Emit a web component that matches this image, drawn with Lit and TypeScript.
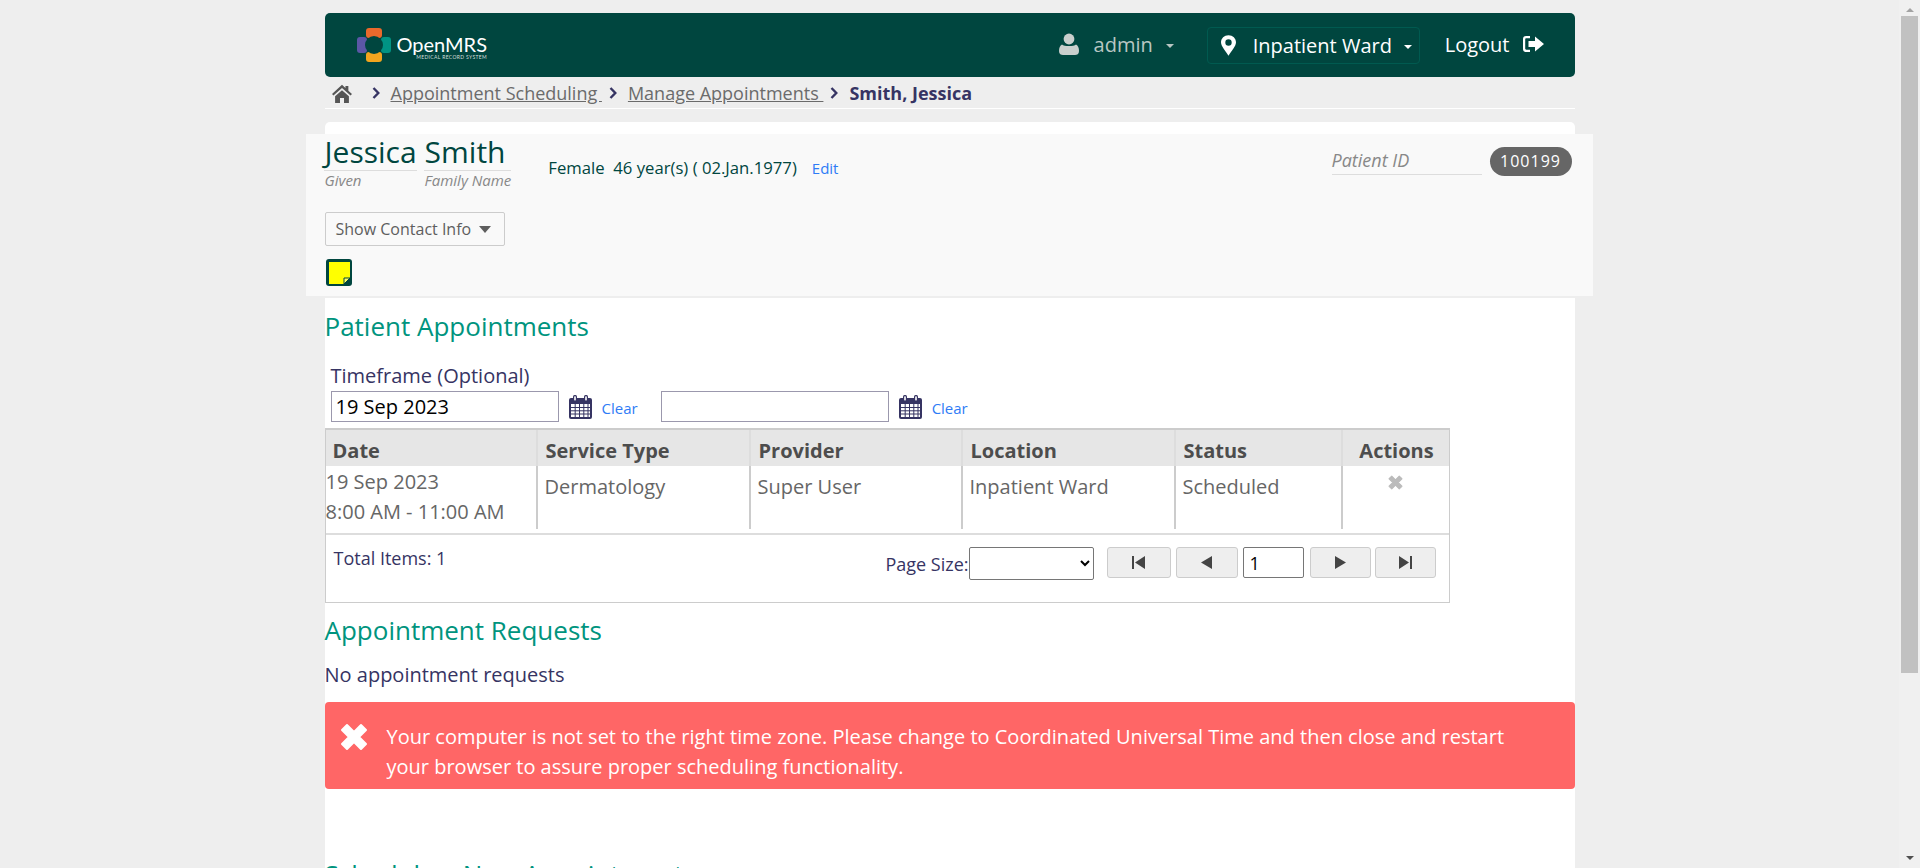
import { LitElement, css, html, svg } from 'lit'
import { customElement } from 'lit/decorators.js'

const homeIcon = svg`<path d="M12 2 L1 12 l1.6 1.8 L12 5.6 l9.4 8.2 L23 12 l-4-3.6 V3.2 h-3.2 v2.4z M4.4 14.6 L12 8 l7.6 6.6 V22 h-5.4 v-5.4 h-4.4 V22 H4.4z"/>`
const userIcon = svg`<circle cx="10" cy="6" r="5.4"/><path d="M3 11.5 C5 13.5 15 13.5 17 11.5 C19 12.5 20 15 20 18 C20 21 18 22 16 22 H4 C2 22 0 21 0 18 C0 15 1 12.5 3 11.5z"/>`
const pinIcon = svg`<path fill-rule="evenodd" d="M8 0 C3.4 0 0 3.4 0 7.6 C0 12 5 17 8 22 C11 17 16 12 16 7.6 C16 3.4 12.6 0 8 0z M8 4.4 A3.4 3.4 0 1 1 8 11.2 A3.4 3.4 0 1 1 8 4.4z"/>`
const logoutIcon = svg`<path d="M8 1 H4 C2 1 1 2.2 1 4 V14 C1 15.8 2 17 4 17 H8 V14.8 H4.4 C3.6 14.8 3.2 14.3 3.2 13.6 V4.4 C3.2 3.7 3.6 3.2 4.4 3.2 H8z"/><path d="M6.5 6 H13 V1.6 L22 9 L13 16.4 V12 H6.5z"/>`
const closeIcon = svg`<polygon points="7,2 14,9 21,2 26,7 19,14 26,21 21,26 14,19 7,26 2,21 9,14 2,7" stroke-width="2" stroke-linejoin="round"/>`

@customElement('app-root')
export class AppRoot extends LitElement {
  static styles = css`
    :host {
      display: flex;
      height: 100vh;
      overflow: hidden;
      background: #eeeeee;
      font-family: 'Open Sans', sans-serif;
      font-size: 20px;
      color: #363463;
    }

    .page {
      flex: 1;
      min-width: 0;
      overflow: hidden;
    }

    .container {
      width: 1250px;
      margin: 0 auto;
      padding-top: 13px;
    }

    /* top bar */
    .topbar {
      display: flex;
      align-items: center;
      height: 64px;
      border-radius: 5px;
      background: #00463f;
      color: #ffffff;
      padding: 0 30px 0 32px;
    }

    .logo {
      display: flex;
      align-items: center;
      gap: 6px;
    }

    .logo-text {
      display: flex;
      flex-direction: column;
      align-items: flex-end;
      padding-top: 3px;
      font-family: Lato, sans-serif;
      font-size: 20px;
      line-height: 20px;
    }

    .logo-text small {
      font-size: 5px;
      line-height: 6px;
      letter-spacing: 0.35px;
      color: #d5dedc;
    }

    .spacer {
      flex: 1;
    }

    .user {
      display: flex;
      align-items: center;
      padding-bottom: 2px;
      color: #b8c6c3;
    }

    .user svg {
      fill: #c9cfcd;
      margin-right: 15px;
    }

    .caret {
      width: 0;
      height: 0;
      border: 4.5px solid transparent;
      border-top-color: currentColor;
      border-bottom: 0;
      margin-left: 13px;
      margin-top: 3px;
    }

    .ward {
      display: flex;
      align-items: center;
      width: 213px;
      height: 37px;
      box-sizing: border-box;
      margin-left: 33px;
      padding: 0 7px 0 13px;
      border: 1px solid #005a50;
      border-radius: 4px;
      white-space: nowrap;
    }

    .ward svg {
      fill: #ffffff;
      margin-right: 17px;
    }

    .ward .caret {
      margin-left: auto;
    }

    .logout {
      display: flex;
      align-items: center;
      gap: 12px;
      margin-left: 25px;
      padding-bottom: 2px;
    }

    .logout svg {
      fill: #ffffff;
    }

    /* breadcrumb */
    .crumbs {
      display: flex;
      align-items: center;
      height: 32px;
      box-sizing: border-box;
      padding: 0 0 0 6px;
      border-bottom: 1px solid #ffffff;
      font-size: 18px;
      color: #5b57a6;
    }

    .crumbs .home {
      fill: #555555;
      margin-right: 19px;
    }

    .crumbs a {
      color: #6b6b6b;
      text-decoration: underline;
      white-space: pre;
    }

    .crumbs .sep {
      fill: none;
      stroke: #363463;
      stroke-width: 2.4;
      margin: 0 11px 0 7px;
    }

    .crumbs .sep.first {
      margin-left: 0;
    }

    .crumbs b {
      color: #363463;
      font-weight: 700;
    }

    /* white sheet */
    .sheet {
      margin-top: 13px;
      background: #ffffff;
      border-radius: 5px 5px 0 0;
      padding-top: 12px;
    }

    .patient {
      display: flex;
      justify-content: space-between;
      height: 162px;
      box-sizing: content-box;
      margin: 0 -18px 0 -19px;
      padding: 0 21px 0 19px;
      background: #f9f9f9;
      border-bottom: 2px solid #eeeeee;
    }

    .names {
      display: flex;
      align-items: flex-start;
      height: 71px;
    }

    .name {
      display: flex;
      flex-direction: column;
      margin-right: 8px;
      color: #00463f;
      font-size: 30px;
      line-height: 36px;
    }

    .name span {
      border-bottom: 1px solid #dddddd;
      margin-left: -1px;
      padding-left: 1px;
    }

    .name small {
      font-size: 15px;
      line-height: 18px;
      font-style: italic;
      color: #888888;
    }

    .demographics {
      display: flex;
      align-items: baseline;
      margin: 22px 0 0 29px;
      font-size: 16.7px;
      color: #00463f;
      white-space: pre;
    }

    .demographics a,
    .clear {
      font-size: 15px;
      color: #2f7cf6;
    }

    .demographics a {
      margin-left: 15px;
    }

    .contact {
      display: flex;
      align-items: center;
      justify-content: space-between;
      width: 180px;
      height: 34px;
      box-sizing: border-box;
      margin-top: 7px;
      padding: 0 13px 0 10px;
      border: 1px solid #cccccc;
      border-radius: 2px;
      font-size: 16px;
      color: #5e5e5e;
    }

    .contact i {
      width: 0;
      height: 0;
      border: 6px solid transparent;
      border-top: 7px solid #5e5e5e;
      border-bottom: 0;
    }

    .note {
      display: block;
      margin: 13px 0 0 1px;
    }

    .identifier {
      display: flex;
      align-items: flex-start;
      gap: 8px;
      margin-top: 13px;
    }

    .identifier em {
      display: block;
      width: 150px;
      height: 27px;
      border-bottom: 1px solid #dddddd;
      font-size: 18px;
      line-height: 26px;
      color: #888888;
    }

    .identifier b {
      width: 82px;
      height: 29px;
      border-radius: 15px;
      background: #666666;
      color: #ffffff;
      font-size: 16px;
      font-weight: 400;
      line-height: 29px;
      letter-spacing: 1px;
      text-align: center;
    }

    /* sections */
    h2 {
      margin: 0;
      font-size: 26px;
      font-weight: 400;
      line-height: 33px;
      color: #00947e;
    }

    .appointments {
      padding-top: 12px;
    }

    .timeframe {
      margin: 20px 0 0 6px;
      line-height: 25px;
    }

    .dates {
      display: flex;
      align-items: center;
      height: 31px;
      margin: 3px 0 6px 6px;
    }

    .dates input {
      width: 228px;
      height: 31px;
      box-sizing: border-box;
      padding: 0 4px;
      border: 1px solid #9b98ad;
      font: inherit;
      color: #000000;
      outline: none;
    }

    .dates svg {
      margin-left: 10px;
    }

    .clear {
      margin: 3px 23px 0 10px;
    }

    table {
      width: 1123px;
      border-collapse: collapse;
      table-layout: fixed;
      color: #666666;
    }

    .grid {
      width: 1125px;
      box-sizing: border-box;
      border: 1px solid #cccccc;
      border-top-width: 2px;
    }

    th {
      height: 36px;
      padding: 5px 0 0 8px;
      box-sizing: border-box;
      background: #e6e6e6;
      border-left: 2px solid #dddddd;
      color: #4d4d4d;
      font-size: 20px;
      font-weight: 700;
      text-align: left;
    }

    td {
      height: 63px;
      padding: 6px 0 0 7px;
      box-sizing: border-box;
      border-left: 2px solid #cccccc;
      line-height: 30px;
      vertical-align: top;
    }

    th:first-child,
    td:first-child {
      border-left: 0;
    }

    th:first-child {
      padding-left: 7px;
    }

    td.when {
      padding: 1px 0 0;
      white-space: nowrap;
    }

    th.center {
      padding-left: 2px;
      text-align: center;
    }

    td.center {
      padding: 2px 0 0 0;
      text-align: center;
    }

    .remove {
      fill: #bbbbbb;
      stroke: #bbbbbb;
    }

    .pager {
      display: flex;
      height: 69px;
      margin-top: 4px;
      border-top: 2px solid #dddddd;
      box-sizing: border-box;
      padding: 12px 13px 0 8px;
      font-size: 18px;
    }

    .total {
      line-height: 22px;
    }

    .size {
      margin-left: auto;
      line-height: 35px;
    }

    .pager select {
      width: 125px;
      height: 33px;
      margin-right: 13px;
      border: 1px solid #767676;
      border-radius: 2px;
      background: #ffffff;
      font: inherit;
    }

    .pager button {
      display: flex;
      align-items: center;
      justify-content: center;
      width: 61px;
      height: 31px;
      margin-right: 5px;
      padding: 0;
      border: 1px solid #cccccc;
      border-radius: 3px;
      background: #eeeeee;
      fill: #444444;
    }

    .pager button.wide {
      width: 64px;
    }

    .pager button.mid {
      width: 62px;
    }

    .pager button.next {
      margin-right: 4px;
    }

    .pager button:last-child {
      margin-right: 0;
    }

    .pager input {
      width: 61px;
      height: 31px;
      box-sizing: border-box;
      margin-right: 6px;
      padding: 0 6px;
      border: 1px solid #767676;
      border-radius: 2px;
      font: inherit;
      color: #000000;
    }

    .requests {
      margin-top: 11px;
    }

    .none {
      margin: 14px 0 0;
      line-height: 27px;
    }

    .alert {
      display: flex;
      align-items: flex-start;
      height: 87px;
      box-sizing: border-box;
      margin-top: 14px;
      padding: 20px 40px 0 15px;
      border-radius: 4px;
      background: #ff6666;
      color: #ffffff;
      line-height: 30px;
    }

    .alert svg {
      flex: none;
      fill: #ffffff;
      stroke: #ffffff;
      margin: 1px 19px 0 0;
    }

    .schedule {
      margin-top: 69px;
    }

    /* window scrollbar */
    .scrollbar {
      display: flex;
      flex: none;
      flex-direction: column;
      align-items: center;
      width: 21px;
      height: 100%;
      background: #f0f0f0;
    }

    .scrollbar .thumb {
      width: 17px;
      height: 657px;
      margin-top: 4px;
      background: #c1c1c1;
    }

    .scrollbar .up,
    .scrollbar .down {
      width: 0;
      height: 0;
      border: 4.5px solid transparent;
    }

    .scrollbar .up {
      margin-top: 8px;
      border-top: 0;
      border-bottom: 4px solid #a3a3a3;
    }

    .scrollbar .down {
      margin-top: auto;
      margin-bottom: 8px;
      border-bottom: 0;
      border-top: 4px solid #505050;
    }
  `

  private calendar() {
    return html`<svg width="23" height="24" viewBox="0 0 23 24">
      <rect x="0" y="3" width="23" height="21" rx="2" fill="#363463" />
      <rect x="2" y="9" width="19" height="13" fill="#ffffff" />
      <path
        d="M2 12.5h19M2 15.8h19M2 19h19M6.2 9v13M10.5 9v13M14.8 9v13M19 9v13"
        stroke="#363463"
        stroke-width="1"
        fill="none"
      />
      <rect x="4" y="0" width="4" height="7" rx="1.5" fill="#363463" />
      <rect x="15" y="0" width="4" height="7" rx="1.5" fill="#363463" />
      <rect x="5.2" y="1.4" width="1.6" height="4" fill="#ffffff" />
      <rect x="16.2" y="1.4" width="1.6" height="4" fill="#ffffff" />
    </svg>`
  }

  private chevron(extra = '') {
    return html`<svg class="sep ${extra}" width="8" height="12" viewBox="0 0 8 12">
      <path d="M1.5 1 L6.3 6 L1.5 11" />
    </svg>`
  }

  render() {
    return html`
      <div class="page">
        <div class="container">
          <header class="topbar">
            <div class="logo">
              <svg width="34" height="34" viewBox="0 0 34 34">
                <rect x="9" y="0" width="16" height="10" rx="3" fill="#e9692c" />
                <rect x="9" y="24" width="16" height="10" rx="3" fill="#f2a51e" />
                <rect x="0" y="9" width="10" height="16" rx="3" fill="#5b57a6" />
                <rect x="24" y="9" width="10" height="16" rx="3" fill="#009384" />
                <circle cx="17" cy="17" r="9" fill="#00463f" />
              </svg>
              <div class="logo-text">OpenMRS<small>MEDICAL RECORD SYSTEM</small></div>
            </div>
            <div class="spacer"></div>
            <div class="user">
              <svg width="20" height="22" viewBox="0 0 20 22">${userIcon}</svg>
              admin
              <i class="caret"></i>
            </div>
            <div class="ward">
              <svg width="15" height="21" viewBox="0 0 16 22">${pinIcon}</svg>
              Inpatient Ward
              <i class="caret"></i>
            </div>
            <div class="logout">
              Logout
              <svg width="23" height="18" viewBox="0 0 23 18">${logoutIcon}</svg>
            </div>
          </header>

          <nav class="crumbs">
            <svg class="home" width="22" height="20" viewBox="0 0 24 22">${homeIcon}</svg>
            ${this.chevron('first')}
            <a>Appointment Scheduling </a>
            ${this.chevron()}
            <a>Manage Appointments </a>
            ${this.chevron()}
            <b>Smith, Jessica</b>
          </nav>

          <main class="sheet">
            <section class="patient">
              <div>
                <div class="names">
                  <div class="name"><span>Jessica</span><small>Given</small></div>
                  <div class="name"><span>Smith</span><small>Family Name</small></div>
                  <div class="demographics">Female  46 year(s) ( 02.Jan.1977)<a>Edit</a></div>
                </div>
                <div class="contact">Show Contact Info <i></i></div>
                <svg class="note" width="26" height="27" viewBox="0 0 26 27">
                  <rect width="26" height="27" rx="3" fill="#00463f" />
                  <path d="M3 3 H24 V19 L18 25 H3 Z" fill="#ffff00" />
                  <path d="M18 25 V19 H24 Z" fill="#ffff66" stroke="#00463f" />
                </svg>
              </div>
              <div class="identifier">
                <em>Patient ID</em>
                <b>100199</b>
              </div>
            </section>

            <section class="appointments">
              <h2>Patient Appointments</h2>
              <div class="timeframe">Timeframe (Optional)</div>
              <div class="dates">
                <input type="text" .value=${'19 Sep 2023'} />
                ${this.calendar()}
                <a class="clear">Clear</a>
                <input type="text" />
                ${this.calendar()}
                <a class="clear">Clear</a>
              </div>
              <div class="grid">
                <table>
                  <colgroup>
                    <col style="width:211px" />
                    <col style="width:213px" />
                    <col style="width:212px" />
                    <col style="width:213px" />
                    <col style="width:167px" />
                    <col />
                  </colgroup>
                  <tr>
                    <th>Date</th>
                    <th>Service Type</th>
                    <th>Provider</th>
                    <th>Location</th>
                    <th>Status</th>
                    <th class="center">Actions</th>
                  </tr>
                  <tr>
                    <td class="when">19 Sep 2023<br />8:00 AM - 11:00 AM</td>
                    <td>Dermatology</td>
                    <td>Super User</td>
                    <td>Inpatient Ward</td>
                    <td>Scheduled</td>
                    <td class="center">
                      <svg class="remove" width="15" height="15" viewBox="0 0 28 28">${closeIcon}</svg>
                    </td>
                  </tr>
                </table>
                <div class="pager">
                  <div class="total">Total Items: 1</div>
                  <div class="size">Page Size:</div>
                  <select></select>
                  <button class="wide">
                    <svg width="13" height="13" viewBox="0 0 13 13"><path d="M0 0h2v13H0z M13 0v13L3 6.5z" /></svg>
                  </button>
                  <button class="mid">
                    <svg width="11" height="13" viewBox="0 0 11 13"><path d="M11 0v13L0 6.5z" /></svg>
                  </button>
                  <input type="text" .value=${'1'} />
                  <button class="next">
                    <svg width="11" height="13" viewBox="0 0 11 13"><path d="M0 0v13L11 6.5z" /></svg>
                  </button>
                  <button>
                    <svg width="13" height="13" viewBox="0 0 13 13"><path d="M11 0h2v13h-2z M0 0v13L10 6.5z" /></svg>
                  </button>
                </div>
              </div>
            </section>

            <section class="requests">
              <h2>Appointment Requests</h2>
              <p class="none">No appointment requests</p>
            </section>

            <div class="alert">
              <svg width="28" height="28" viewBox="0 0 28 28">${closeIcon}</svg>
              <span>Your computer is not set to the right time zone. Please change to Coordinated Universal Time and then close and restart your browser to assure proper scheduling functionality.</span>
            </div>

            <section class="schedule">
              <h2>Schedule a New Appointment</h2>
            </section>
          </main>
        </div>
      </div>
      <div class="scrollbar">
        <i class="up"></i>
        <i class="thumb"></i>
        <i class="down"></i>
      </div>
    `
  }
}
